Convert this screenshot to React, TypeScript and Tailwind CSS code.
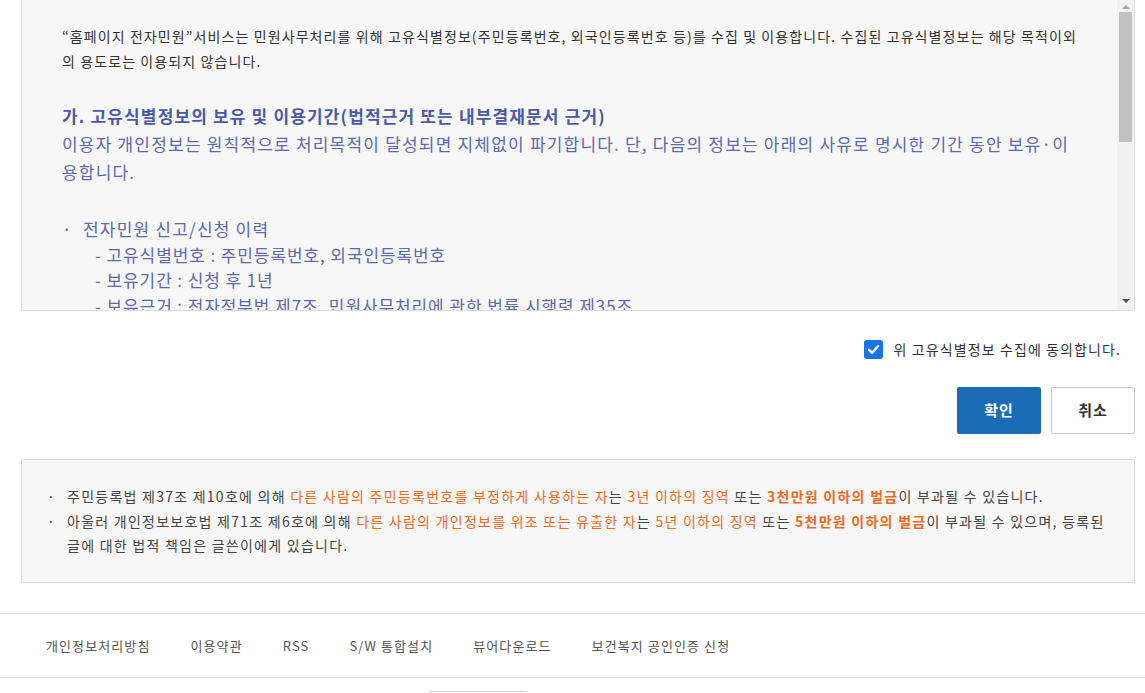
import React, { useState } from "react";

const FONT = { fontFamily: '"Noto Sans CJK KR", "Noto Sans", sans-serif' };

const footerLinks = [
  "개인정보처리방침",
  "이용약관",
  "RSS",
  "S/W 통합설치",
  "뷰어다운로드",
  "보건복지 공인인증 신청",
];

// fake scrollbar so the picture matches the browser chrome of the reference
const ScrollBar = () => (
  <div className="absolute right-0 top-0 bottom-0 w-[17px] bg-[#f1f1f1]">
    <div className="flex justify-center pt-[5px]">
      <div className="w-0 h-0 border-l-[4px] border-r-[4px] border-b-[4px] border-l-transparent border-r-transparent border-b-[#a3a3a3]" />
    </div>
    <div className="mx-[2px] mt-[3px] h-[130px] bg-[#c1c1c1]" />
    <div className="absolute bottom-[7px] left-0 right-0 flex justify-center">
      <div className="w-0 h-0 border-l-[4px] border-r-[4px] border-t-[4px] border-l-transparent border-r-transparent border-t-[#505050]" />
    </div>
  </div>
);

const App: React.FC = () => {
  const [agree, setAgree] = useState(true);

  return (
    <div className="bg-white w-[1145px] h-[693px] overflow-hidden" style={FONT}>
      {/* 고유식별정보 안내 박스 */}
      <div className="relative ml-[21px] mr-[10px] -mt-px h-[312px] border border-[#dcdcdc] bg-[#f7f7f7] overflow-hidden">
        <div className="pl-[40px] pr-[20px] pt-[24px]">
          <p className="text-[14px] leading-[25px] text-[#333] tracking-[1.1px]">
            “홈페이지 전자민원”서비스는 민원사무처리를 위해 고유식별정보(주민등록번호, 외국인등록번호 등)를 수집 및 이용합니다. 수집된 고유식별정보는 해당 목적이외
            <br />
            의 용도로는 이용되지 않습니다.
          </p>

          <h4 className="mt-[28px] text-[17px] font-bold leading-[28px] text-[#4a5aa6] tracking-[1.15px]">
            가. 고유식별정보의 보유 및 이용기간(법적근거 또는 내부결재문서 근거)
          </h4>
          <p className="text-[17px] leading-[28px] text-[#5d69ad] tracking-[1.2px]">
            이용자 개인정보는 원칙적으로 처리목적이 달성되면 지체없이 파기합니다. 단, 다음의 정보는 아래의 사유로 명시한 기간 동안 보유·이
            <br />
            용합니다.
          </p>

          <ul className="mt-[30px] text-[17px] leading-[25.5px] text-[#5d69ad]">
            <li className="flex">
              <span className="w-[21px] text-[#555]">·</span>
              <div>
                <div className="tracking-[1.2px]">전자민원 신고/신청 이력</div>
                <div className="pl-[12px] tracking-[0.9px]">- 고유식별번호 : 주민등록번호, 외국인등록번호</div>
                <div className="pl-[12px] tracking-[0.9px]">- 보유기간 : 신청 후 1년</div>
                <div className="pl-[12px] tracking-[0.9px]">- 보유근거 : 전자정부법 제7조, 민원사무처리에 관한 법률 시행령 제35조</div>
              </div>
            </li>
          </ul>
        </div>
        <ScrollBar />
      </div>

      {/* 동의 체크 */}
      <div className="ml-[21px] mr-[10px] mt-[28px] flex justify-end pr-[14px]">
        <label className="flex items-center gap-[11px] cursor-pointer" onClick={() => setAgree(!agree)}>
          <span
            className={`w-[19px] h-[19px] rounded-[3px] flex items-center justify-center ${
              agree ? "bg-[#1a73e8]" : "bg-white border border-[#767676]"
            }`}
          >
            {agree && (
              <svg width="13" height="13" viewBox="0 0 13 13">
                <path d="M2 6.8 L5.1 9.8 L11 3.2" fill="none" stroke="#fff" strokeWidth="2.4" strokeLinecap="round" strokeLinejoin="round" />
              </svg>
            )}
          </span>
          <span className="text-[14px] text-[#333] tracking-[1.1px]">위 고유식별정보 수집에 동의합니다.</span>
        </label>
      </div>

      {/* 버튼 */}
      <div className="mr-[10px] mt-[27px] flex justify-end gap-[10px]">
        <button className="w-[84px] h-[47px] rounded-[2px] bg-[#1a6cb6] text-white text-[15px] font-bold tracking-[1px]">확인</button>
        <button className="w-[84px] h-[47px] rounded-[2px] bg-white border border-[#c8c8c8] text-[#333] text-[15px] font-bold tracking-[1px]">취소</button>
      </div>

      {/* 유의사항 */}
      <div className="ml-[21px] mr-[10px] mt-[25px] h-[124px] border border-[#dcdcdc] bg-[#f7f7f7] pl-[25px] pr-[4px] pt-[24px]">
        <ul className="text-[14px] leading-[24.5px] text-[#444] tracking-[1.25px] whitespace-nowrap">
          <li className="flex">
            <span className="w-[20px] shrink-0">·</span>
            <span>
              주민등록법 제37조 제10호에 의해 <span className="text-[#ef6a1e]">다른 사람의 주민등록번호를 부정하게 사용하는 자</span>는{" "}
              <span className="text-[#ef6a1e]">3년 이하의 징역</span> 또는{" "}
              <span className="text-[#ef6a1e] font-bold">3천만원 이하의 벌금</span>이 부과될 수 있습니다.
            </span>
          </li>
          <li className="flex">
            <span className="w-[20px] shrink-0">·</span>
            <span>
              아울러 개인정보보호법 제71조 제6호에 의해 <span className="text-[#ef6a1e]">다른 사람의 개인정보를 위조 또는 유출한 자</span>는{" "}
              <span className="text-[#ef6a1e]">5년 이하의 징역</span> 또는{" "}
              <span className="text-[#ef6a1e] font-bold">5천만원 이하의 벌금</span>이 부과될 수 있으며, 등록된
              <br />
              글에 대한 법적 책임은 글쓴이에게 있습니다.
            </span>
          </li>
        </ul>
      </div>

      {/* 푸터 링크 */}
      <div className="mt-[30px] h-[65px] border-t border-b border-[#d5d5d5] flex items-center pl-[46px] gap-[40px]">
        {footerLinks.map((link) => (
          <a key={link} href="#" className="text-[13px] text-[#555] tracking-[1.1px]">
            {link}
          </a>
        ))}
      </div>

      <div className="mt-[13px] ml-[428px] w-[99px] h-[30px] border border-[#cfcfcf] rounded-[3px] bg-white" />
    </div>
  );
};

export default App;
